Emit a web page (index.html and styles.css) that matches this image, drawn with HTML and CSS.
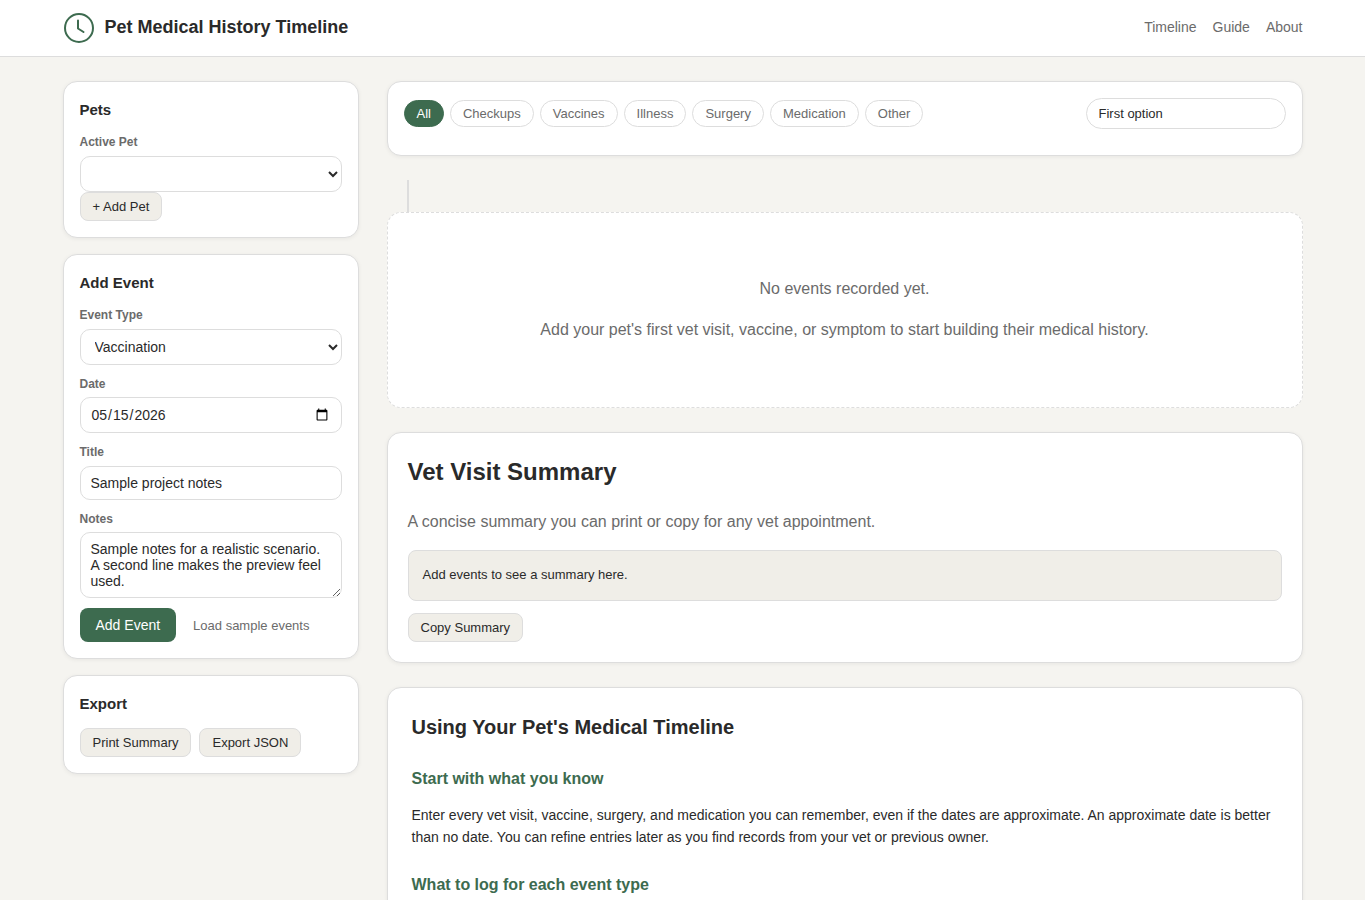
FILE: index.html
```html
<!DOCTYPE html>
<html lang="en">
<head>
    <meta charset="UTF-8">
    <title>Pet Medical History Timeline</title>
    <link rel="stylesheet" href="styles.css">
</head>
<body>

<header class="site-header">
    <div class="header-inner">
        <div class="brand">
            <svg class="brand-icon" viewBox="0 0 32 32" fill="none" stroke="#3d6b4f" stroke-width="2" stroke-linecap="round" stroke-linejoin="round">
                <circle cx="16" cy="16" r="14"/>
                <path d="M15 8.5v8l5.5 3.5"/>
            </svg>
            <span class="brand-name">Pet Medical History Timeline</span>
        </div>
        <nav class="site-nav">
            <a href="#timeline">Timeline</a>
            <a href="#guide">Guide</a>
            <a href="#about">About</a>
        </nav>
    </div>
</header>

<div class="layout">
    <aside class="sidebar">
        <section class="card side-card">
            <h3>Pets</h3>
            <label for="pet">Active Pet</label>
            <select id="pet" class="field select-field"></select>
            <div><button class="btn">+ Add Pet</button></div>
        </section>

        <section class="card side-card">
            <h3>Add Event</h3>
            <label for="type">Event Type</label>
            <select id="type" class="field select-field">
                <option>Vaccination</option>
                <option>Checkup</option>
            </select>
            <label for="date">Date</label>
            <input id="date" class="field date-field" type="date" value="2026-05-15">
            <label for="title">Title</label>
            <input id="title" class="field title-field" type="text" value="Sample project notes">
            <label for="notes">Notes</label>
            <textarea id="notes" class="field notes-field" rows="3">Sample notes for a realistic scenario. A second line makes the preview feel used.</textarea>
            <div class="form-actions">
                <button class="btn-primary">Add Event</button>
                <a class="link-btn" href="#">Load sample events</a>
            </div>
        </section>

        <section class="card side-card">
            <h3 class="export-title">Export</h3>
            <div class="btn-row">
                <button class="btn">Print Summary</button>
                <button class="btn">Export JSON</button>
            </div>
        </section>
    </aside>

    <main class="content">
        <section class="card filters">
            <div class="pills">
                <button class="pill active">All</button>
                <button class="pill">Checkups</button>
                <button class="pill">Vaccines</button>
                <button class="pill">Illness</button>
                <button class="pill">Surgery</button>
                <button class="pill">Medication</button>
                <button class="pill">Other</button>
            </div>
            <input class="search" type="text" value="First option">
        </section>

        <div class="timeline" id="timeline">
            <div class="card empty">
                <p>No events recorded yet.</p>
                <p>Add your pet's first vet visit, vaccine, or symptom to start building their medical history.</p>
            </div>
        </div>

        <section class="card summary">
            <h2>Vet Visit Summary</h2>
            <p class="summary-lead">A concise summary you can print or copy for any vet appointment.</p>
            <div class="summary-box">Add events to see a summary here.</div>
            <button class="btn">Copy Summary</button>
        </section>

        <section class="card guide" id="guide">
            <h2>Using Your Pet's Medical Timeline</h2>
            <h3>Start with what you know</h3>
            <p>Enter every vet visit, vaccine, surgery, and medication you can remember, even if the dates are approximate. An approximate date is better than no date. You can refine entries later as you find records from your vet or previous owner.</p>
            <h3>What to log for each event type</h3>
        </section>
    </main>
</div>

</body>
</html>
```

FILE: styles.css
```css
* { box-sizing: border-box; }
body { margin: 0; background: #f5f4f0; color: #2a2a2a; font-family: "Liberation Sans", Arial, sans-serif; font-size: 16px; }

.site-header { height: 57px; background: #fff; border-bottom: 1px solid #ddd; }
.header-inner { max-width: 1240px; height: 56px; margin: 0 auto; display: flex; align-items: center; justify-content: space-between; }
.brand { display: flex; align-items: center; gap: 10px; }
.brand-icon { width: 32px; height: 32px; display: block; }
.brand-name { margin-bottom: 2px; font-size: 18px; font-weight: 700; }
.site-nav { margin-bottom: 2px; display: flex; gap: 16px; }
.site-nav a { color: #6b6b6b; font-size: 14px; text-decoration: none; }

.layout { max-width: 1240px; margin: 0 auto; padding-top: 24px; display: grid; grid-template-columns: 296px 916px; gap: 28px; align-items: start; }
.card { background: #fff; border: 1px solid #ddd; border-radius: 14px; box-shadow: 0 1px 4px rgba(0, 0, 0, 0.06); }

.sidebar { display: flex; flex-direction: column; gap: 16px; }
.side-card { padding: 16px; }
.side-card h3 { margin: 3px 0 16px; font-size: 15px; line-height: 18px; font-weight: 700; }
.side-card .export-title { margin-top: 3px; margin-bottom: 15px; }
.side-card label { display: block; margin: 0 0 6px; color: #6b6b6b; font-size: 12px; line-height: 14px; font-weight: 700; }

.field { display: block; width: 100%; margin-bottom: 12px; padding: 8px 10px; background: #fff; border: 1px solid #ddd; border-radius: 10px; color: #2a2a2a; font-family: inherit; font-size: 14px; line-height: 16px; }
.select-field { height: 36px; margin-top: 7px; }
.date-field { height: 36px; }
.title-field { margin-top: 7px; }
.notes-field { height: 66px; margin-bottom: 10px; resize: vertical; }
#pet { margin-bottom: 0; }

.btn { padding: 6px 12px; background: #f0eee8; border: 1px solid #ddd; border-radius: 8px; color: #2a2a2a; font-family: inherit; font-size: 13px; line-height: 15px; cursor: pointer; }
.btn-primary { height: 34px; padding: 0 16px; background: #3d6b4f; border: 0; border-radius: 8px; color: #fff; font-family: inherit; font-size: 14px; cursor: pointer; }
.form-actions { display: flex; align-items: center; gap: 17px; }
.link-btn { color: #6b6b6b; font-size: 13px; text-decoration: none; }
.btn-row { display: flex; gap: 8px; }

.content { display: flex; flex-direction: column; gap: 24px; min-width: 0; }
.filters { display: flex; justify-content: space-between; align-items: flex-start; padding: 16px 16px 26px; }
.pills { display: flex; gap: 6px; padding-top: 2px; }
.pill { height: 27px; padding: 0 12px; background: #fff; border: 1px solid #ddd; border-radius: 999px; color: #6b6b6b; font-family: inherit; font-size: 13px; cursor: pointer; }
.pill.active { background: #3d6b4f; border-color: #3d6b4f; color: #fff; }
.search { width: 200px; height: 31px; padding: 0 12px; background: #fff; border: 1px solid #ddd; border-radius: 999px; color: #2a2a2a; font-family: inherit; font-size: 13px; }

.timeline { padding-top: 32px; position: relative; }
.timeline::before { content: ""; position: absolute; left: 20px; top: 0; width: 2px; height: 32px; background: #ddd; }
.empty { height: 196px; padding: 67px 16px 0; border-style: dashed; box-shadow: none; text-align: center; color: #6b6b6b; }
.empty p { margin: 0 0 23px; line-height: 18px; }

.summary { padding: 20px; }
.summary h2 { margin: 4px 0 26px; font-size: 24px; line-height: 30px; }
.summary-lead { margin: 0 0 19px; color: #6b6b6b; line-height: 18px; }
.summary-box { height: 51px; margin-bottom: 12px; padding: 0 14px 2px; display: flex; align-items: center; background: #f0eee8; border: 1px solid #ddd; border-radius: 8px; font-size: 13px; }

.guide { min-height: 300px; padding: 24px; }
.guide h2 { margin: 2px 0 29px; font-size: 20px; line-height: 26px; }
.guide h3 { margin: 0 0 15px; color: #3d6b4f; font-size: 16px; line-height: 20px; }
.guide p { margin: 0 0 27px; font-size: 14px; line-height: 22px; }
```
